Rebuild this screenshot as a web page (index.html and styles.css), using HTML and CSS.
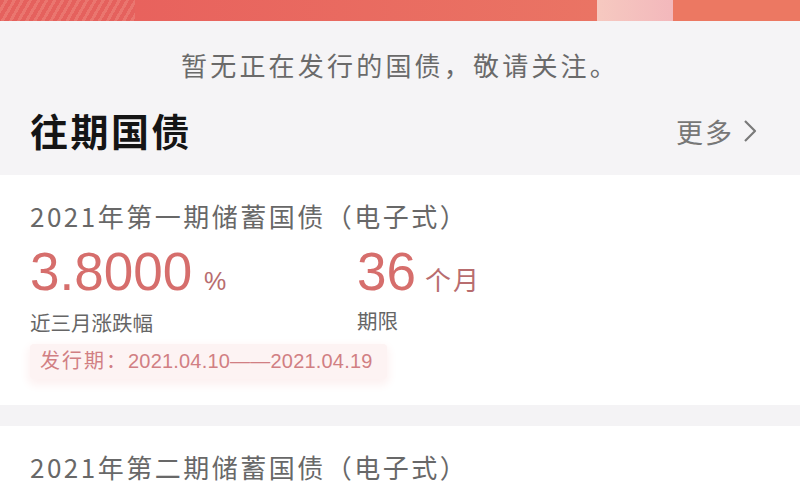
FILE: index.html
```html
<!DOCTYPE html>
<html lang="zh-CN">
<head>
<meta charset="utf-8">
<link rel="stylesheet" href="styles.css">
</head>
<body>
<div class="page">
  <div class="banner">
    <div class="stripes"></div>
    <div class="banner-mid"></div>
    <div class="banner-light"></div>
    <div class="banner-right"></div>
  </div>
  <div class="top">
    <p class="notice">暂无正在发行的国债，敬请关注。</p>
    <div class="head">
      <h2 class="title">往期国债</h2>
      <a class="more">更多<svg class="chev" width="16" height="24" viewBox="0 0 16 24"><path d="M3 2 L13 12 L3 22" fill="none" stroke="#7a7a7a" stroke-width="2.2" stroke-linejoin="round"/></svg></a>
    </div>
  </div>
  <div class="card card-first">
    <div class="card-title">2021年第一期储蓄国债（电子式）</div>
    <div class="stats">
      <div class="stat rate">
        <div class="val"><span class="num">3.8000</span><span class="unit pct">%</span></div>
        <div class="lbl">近三月涨跌幅</div>
      </div>
      <div class="stat">
        <div class="val"><span class="num">36</span><span class="unit">个月</span></div>
        <div class="lbl">期限</div>
      </div>
    </div>
    <div class="tag"><span class="tag-key">发行期：</span><span class="tag-date">2021.04.10——2021.04.19</span></div>
  </div>
  <div class="gap"></div>
  <div class="card">
    <div class="card-title">2021年第二期储蓄国债（电子式）</div>
  </div>
</div>
</body>
</html>
```

FILE: styles.css
```css
html, body {
  margin: 0;
  padding: 0;
  background: #ffffff;
  overflow: hidden;
}
body {
  font-family: "Noto Sans CJK SC", "Noto Sans", sans-serif;
  width: 800px;
  height: 500px;
}
.page {
  width: 800px;
  height: 500px;
  display: flex;
  flex-direction: column;
}
.banner {
  height: 21px;
  display: flex;
  flex-shrink: 0;
}
.stripes {
  width: 135px;
  background: repeating-linear-gradient(120deg, #e5615d 0 4px, #ea766f 4px 7px);
}
.banner-mid {
  flex: 1;
  background: linear-gradient(90deg, #e8625d, #ea7464);
}
.banner-light {
  width: 76px;
  background: linear-gradient(90deg, #f6c9c0, #f3b8bc);
}
.banner-right {
  width: 127px;
  background: #ec7862;
}
.top {
  background: #f5f4f6;
  height: 154px;
  display: flex;
  flex-direction: column;
  flex-shrink: 0;
}
.notice {
  margin: 28px 0 0;
  text-align: center;
  font-size: 26px;
  letter-spacing: 3.2px;
  line-height: 32px;
  color: #6a6a6a;
}
.head {
  display: flex;
  justify-content: space-between;
  align-items: center;
  padding: 0 42px 0 30px;
  margin-top: 25px;
}
.title {
  margin: 0;
  font-size: 38px;
  letter-spacing: 2.5px;
  line-height: 48px;
  font-weight: 700;
  color: #151515;
}
.more {
  display: flex;
  align-items: center;
  gap: 8px;
  font-size: 27px;
  letter-spacing: 2px;
  color: #777777;
  margin-top: 2px;
}
.card {
  background: #ffffff;
  padding: 25px 30px 0;
  flex-shrink: 0;
}
.card-first {
  height: 205px;
}
.card-title {
  font-size: 26px;
  letter-spacing: 2.5px;
  line-height: 32px;
  color: #686868;
}
.stats {
  display: flex;
  margin-top: 9px;
}
.stat {
  display: flex;
  flex-direction: column;
}
.rate {
  width: 327px;
}
.val {
  display: flex;
  align-items: baseline;
  line-height: 62px;
}
.num {
  font-family: "Liberation Sans", Arial, sans-serif;
  font-size: 53px;
  color: #d66e6c;
}
.unit {
  font-size: 26px;
  color: #b86d6f;
  margin-left: 9px;
  letter-spacing: 2px;
}
.pct {
  font-family: "Liberation Sans", Arial, sans-serif;
  font-size: 25px;
  margin-left: 12px;
}
.lbl {
  font-size: 20.5px;
  line-height: 28px;
  color: #666666;
  margin-top: -4px;
}
.tag {
  display: inline-block;
  margin: 8px 0 0 0;
  padding: 3px 14px 5px 10px;
  font-size: 20px;
  line-height: 26px;
  color: #d17f83;
  background: #fdf3f3;
  box-shadow: 0 4px 10px 2px #fdf1f1;
  border-radius: 4px;
}
.tag-key {
  letter-spacing: 2px;
}
.tag-date {
  font-family: "Liberation Sans", Arial, sans-serif;
  font-size: 20px;
  letter-spacing: 0.2px;
}
.gap {
  height: 21px;
  background: #f4f3f5;
  flex-shrink: 0;
}
```
